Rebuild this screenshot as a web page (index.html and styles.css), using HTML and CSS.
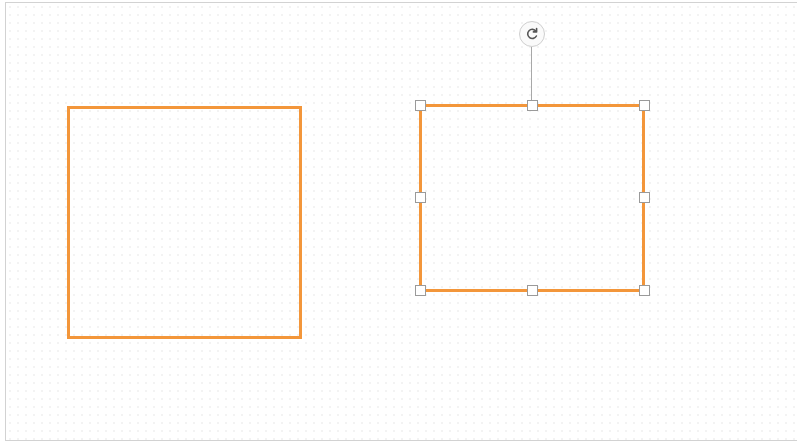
FILE: index.html
```html
<!DOCTYPE html>
<html lang="en">
  <head>
    <meta charset="UTF-8" />
    <meta name="viewport" content="width=device-width, initial-scale=1.0" />
    <title>Canvas</title>
    <link rel="stylesheet" href="styles.css">
  </head>
  <body>
    <div class="canvas">
      <div class="shape shape-left"></div>

      <div class="selection">
        <div class="shape shape-right"></div>
        <div class="rotate-line"></div>
        <div class="rotate">
          <svg width="14" height="14" viewBox="0 0 14 14">
            <path d="M11 4.2A4.6 4.6 0 1 0 11.4 9" fill="none" stroke="#555" stroke-width="1.6" stroke-linecap="round" />
            <path d="M11.6 1.6 L11.6 4.9 L8.4 4.9" fill="none" stroke="#555" stroke-width="1.6" stroke-linecap="round" stroke-linejoin="round" />
          </svg>
        </div>
        <span class="handle h-tl"></span>
        <span class="handle h-tm"></span>
        <span class="handle h-tr"></span>
        <span class="handle h-ml"></span>
        <span class="handle h-mr"></span>
        <span class="handle h-bl"></span>
        <span class="handle h-bm"></span>
        <span class="handle h-br"></span>
      </div>
    </div>
  </body>
</html>
```

FILE: styles.css
```css
body {
  margin: 0;
  background-color: #ffffff;
  font-family: "Liberation Sans", Arial, sans-serif;
}

.canvas {
  position: relative;
  margin: 2px 0 0 5px;
  width: 791px;
  height: 437px;
  border: 1px solid #d2d2d2;
  border-right: none;
  background-color: #ffffff;
  background-image: radial-gradient(circle, #f3f3f3 0.8px, transparent 1px);
  background-size: 8px 8px;
  overflow: hidden;
}

.shape {
  position: absolute;
  box-sizing: border-box;
  border: 3px solid #f3963a;
}

.shape-left {
  left: 61px;
  top: 103px;
  width: 235px;
  height: 233px;
}

/* selected shape + its handles */
.selection {
  position: absolute;
  left: 413px;
  top: 101px;
  width: 226px;
  height: 188px;
}

.shape-right {
  left: 0;
  top: 0;
  width: 100%;
  height: 100%;
}

.rotate-line {
  position: absolute;
  left: 112px;
  top: -57px;
  width: 1px;
  height: 57px;
  background-color: #a8a8a8;
}

.rotate {
  position: absolute;
  left: 100px;
  top: -83px;
  width: 26px;
  height: 26px;
  box-sizing: border-box;
  border: 1px solid #cfcfcf;
  border-radius: 50%;
  background-color: #fafafa;
  display: flex;
  align-items: center;
  justify-content: center;
}

.handle {
  position: absolute;
  width: 11px;
  height: 11px;
  box-sizing: border-box;
  border: 1px solid #9a9a9a;
  background-color: #ffffff;
  margin: -5px 0 0 -5px;
}

.h-tl { left: 1px; top: 1px; }
.h-tm { left: 113px; top: 1px; }
.h-tr { left: 225px; top: 1px; }
.h-ml { left: 1px; top: 93px; }
.h-mr { left: 225px; top: 93px; }
.h-bl { left: 1px; top: 186px; }
.h-bm { left: 113px; top: 186px; }
.h-br { left: 225px; top: 186px; }
```
